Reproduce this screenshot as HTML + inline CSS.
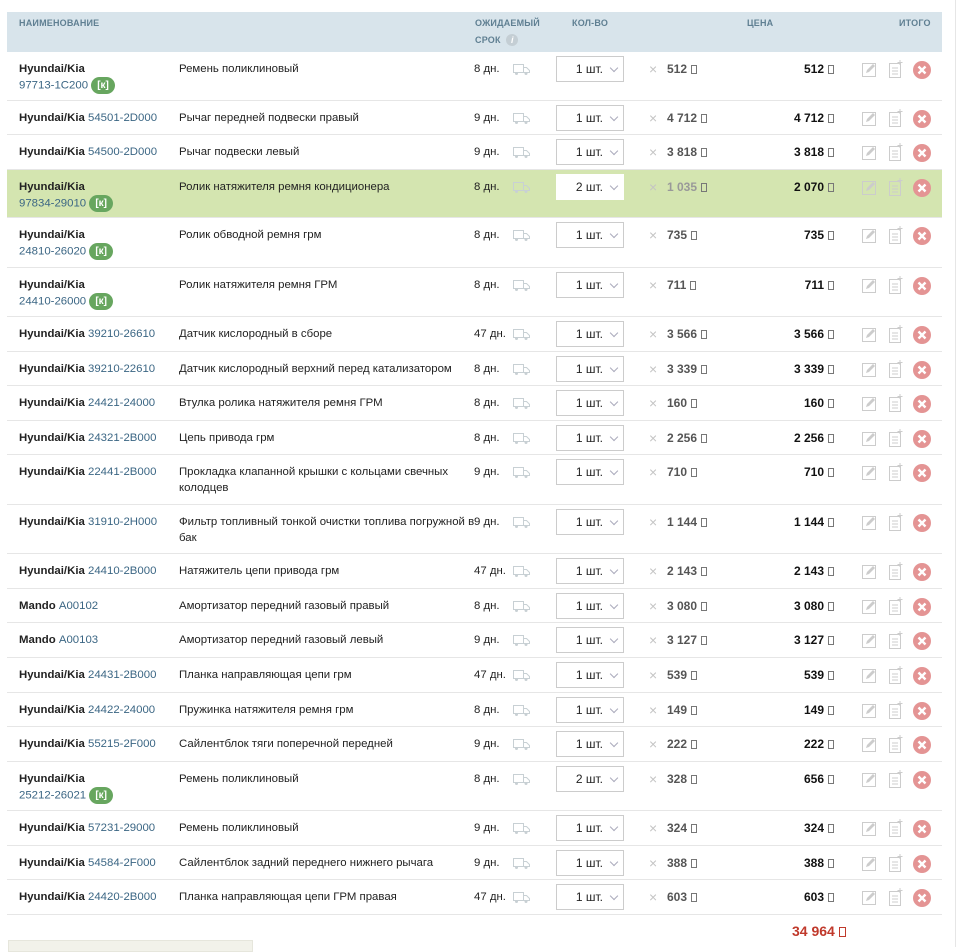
<!DOCTYPE html>
<html><head><meta charset="utf-8">
<style>
*{margin:0;padding:0;box-sizing:border-box}
body{width:960px;height:947px;background:#fff;font-family:"Liberation Sans",Arial,sans-serif;font-size:11.4px;line-height:14px;color:#222;position:relative;overflow:hidden}
.vl{position:absolute;left:955px;top:0;width:1px;height:947px;background:#e6e6e6}
.hd{position:absolute;left:7px;top:12px;width:935px;height:40px;background:#d8e4eb;color:#5f7f92;font-size:9px;font-weight:bold;letter-spacing:.2px}
.hd span{position:absolute}
.r{position:absolute;left:7px;width:935px;border-bottom:1px solid #e6e6e6}
.r.g{background:#d4e5b0}
.r>*{position:absolute}
.b{left:12px;top:10px;font-weight:bold}
.code{color:#3b6684;font-weight:normal}
.b2{left:12px;top:25px;color:#3b6684}
.k{display:inline-block;background:#67a65f;color:#fff;font-weight:bold;font-size:10px;border-radius:9px;width:24px;height:17px;line-height:17px;text-align:center;vertical-align:middle;margin-left:3px}
.d{left:172px;top:9px;width:300px;line-height:16px}
.t{left:467px;top:10px}
.tk{left:506px;top:10px}
.q{left:549px;top:4px;width:68px;height:26px;border:1px solid #ccc;background:#fff;text-align:right;padding-right:20px;line-height:24px;font-size:12px}
.q i{position:absolute;right:6px;top:8px;width:6px;height:6px;border-right:1px solid #aab;border-bottom:1px solid #aab;transform:rotate(45deg)}
.x{left:642px;top:10px;color:#c4c4c4;font-size:14px;line-height:14px}
.p{left:660px;top:10px;font-weight:bold;color:#555;font-size:12px}
.s{display:inline-block;width:6px;height:9px;border:1px solid #777;margin-left:4px;vertical-align:-1px}
.tt{left:700px;top:10px;width:127px;text-align:right;font-weight:bold;color:#111;font-size:12px}
.ic{left:855px;top:8px}
</style></head><body>
<div class="vl"></div>
<div class="hd">
<span style="left:12px;top:4px">НАИМЕНОВАНИЕ</span>
<span style="left:468px;top:4px">ОЖИДАЕМЫЙ</span>
<span style="left:468px;top:21px">СРОК <b style="display:inline-block;width:12px;height:12px;border-radius:6px;background:#c4ced4;color:#fff;text-align:center;font-style:italic;line-height:12px;margin-left:3px">i</b></span>
<span style="left:565px;top:4px">КОЛ-ВО</span>
<span style="left:740px;top:4px">ЦЕНА</span>
<span style="left:892px;top:4px">ИТОГО</span>
</div>

<svg width="0" height="0" style="position:absolute">
<defs>
<g id="trk"><rect x="0.5" y="2.5" width="10" height="8" fill="none" stroke="#c8d0d4"/><path d="M10.5 5.5h3l3 3v2h-6z" fill="none" stroke="#c8d0d4"/><circle cx="3.5" cy="11.5" r="1.5" fill="#c8d0d4"/><circle cx="13" cy="11.5" r="1.5" fill="#c8d0d4"/></g>
<g id="ics"><rect x="0.5" y="3.5" width="13" height="13" fill="none" stroke="#ccc"/><path d="M4 13l1-3 6-6 2 2-6 6z" fill="#ccc"/>
<rect x="27.5" y="3.5" width="11" height="14" fill="none" stroke="#ccc"/><path d="M30 8h6M30 11h6M30 14h6" stroke="#ccc"/><path d="M38 0v5M35.5 2.5h5" stroke="#ccc"/>
<circle cx="60" cy="10" r="9" fill="#e49494"/><path d="M56.5 6.5l7 7M63.5 6.5l-7 7" stroke="#fff" stroke-width="2.4"/></g>
</defs></svg>

<div class="r" style="top:52px;height:49px"><span class="b">Hyundai/Kia</span><span class="b2">97713-1C200<span class="k">[к]</span></span><span class="d">Ремень поликлиновый</span><span class="t">8 дн.</span><svg class="tk" width="18" height="14"><use href="#trk"/></svg><span class="q">1 шт.<i></i></span><span class="x">×</span><span class="p">512<i class="s"></i></span><span class="tt">512<i class="s"></i></span><svg class="ic" width="72" height="20"><use href="#ics"/></svg></div>
<div class="r" style="top:101px;height:34px"><span class="b">Hyundai/Kia <span class="code">54501-2D000</span></span><span class="d">Рычаг передней подвески правый</span><span class="t">9 дн.</span><svg class="tk" width="18" height="14"><use href="#trk"/></svg><span class="q">1 шт.<i></i></span><span class="x">×</span><span class="p">4 712<i class="s"></i></span><span class="tt">4 712<i class="s"></i></span><svg class="ic" width="72" height="20"><use href="#ics"/></svg></div>
<div class="r" style="top:135px;height:35px"><span class="b">Hyundai/Kia <span class="code">54500-2D000</span></span><span class="d">Рычаг подвески левый</span><span class="t">9 дн.</span><svg class="tk" width="18" height="14"><use href="#trk"/></svg><span class="q">1 шт.<i></i></span><span class="x">×</span><span class="p">3 818<i class="s"></i></span><span class="tt">3 818<i class="s"></i></span><svg class="ic" width="72" height="20"><use href="#ics"/></svg></div>
<div class="r g" style="top:170px;height:48px"><span class="b">Hyundai/Kia</span><span class="b2">97834-29010<span class="k">[к]</span></span><span class="d">Ролик натяжителя ремня кондиционера</span><span class="t">8 дн.</span><svg class="tk" width="18" height="14"><use href="#trk"/></svg><span class="q" style="border-color:#fff">2 шт.<i></i></span><span class="x">×</span><span class="p" style="color:#999">1 035<i class="s"></i></span><span class="tt">2 070<i class="s"></i></span><svg class="ic" width="72" height="20"><use href="#ics"/></svg></div>
<div class="r" style="top:218px;height:50px"><span class="b">Hyundai/Kia</span><span class="b2">24810-26020<span class="k">[к]</span></span><span class="d">Ролик обводной ремня грм</span><span class="t">8 дн.</span><svg class="tk" width="18" height="14"><use href="#trk"/></svg><span class="q">1 шт.<i></i></span><span class="x">×</span><span class="p">735<i class="s"></i></span><span class="tt">735<i class="s"></i></span><svg class="ic" width="72" height="20"><use href="#ics"/></svg></div>
<div class="r" style="top:268px;height:49px"><span class="b">Hyundai/Kia</span><span class="b2">24410-26000<span class="k">[к]</span></span><span class="d">Ролик натяжителя ремня ГРМ</span><span class="t">8 дн.</span><svg class="tk" width="18" height="14"><use href="#trk"/></svg><span class="q">1 шт.<i></i></span><span class="x">×</span><span class="p">711<i class="s"></i></span><span class="tt">711<i class="s"></i></span><svg class="ic" width="72" height="20"><use href="#ics"/></svg></div>
<div class="r" style="top:317px;height:35px"><span class="b">Hyundai/Kia <span class="code">39210-26610</span></span><span class="d">Датчик кислородный в сборе</span><span class="t">47 дн.</span><svg class="tk" width="18" height="14"><use href="#trk"/></svg><span class="q">1 шт.<i></i></span><span class="x">×</span><span class="p">3 566<i class="s"></i></span><span class="tt">3 566<i class="s"></i></span><svg class="ic" width="72" height="20"><use href="#ics"/></svg></div>
<div class="r" style="top:352px;height:34px"><span class="b">Hyundai/Kia <span class="code">39210-22610</span></span><span class="d">Датчик кислородный верхний перед катализатором</span><span class="t">8 дн.</span><svg class="tk" width="18" height="14"><use href="#trk"/></svg><span class="q">1 шт.<i></i></span><span class="x">×</span><span class="p">3 339<i class="s"></i></span><span class="tt">3 339<i class="s"></i></span><svg class="ic" width="72" height="20"><use href="#ics"/></svg></div>
<div class="r" style="top:386px;height:35px"><span class="b">Hyundai/Kia <span class="code">24421-24000</span></span><span class="d">Втулка ролика натяжителя ремня ГРМ</span><span class="t">8 дн.</span><svg class="tk" width="18" height="14"><use href="#trk"/></svg><span class="q">1 шт.<i></i></span><span class="x">×</span><span class="p">160<i class="s"></i></span><span class="tt">160<i class="s"></i></span><svg class="ic" width="72" height="20"><use href="#ics"/></svg></div>
<div class="r" style="top:421px;height:34px"><span class="b">Hyundai/Kia <span class="code">24321-2B000</span></span><span class="d">Цепь привода грм</span><span class="t">8 дн.</span><svg class="tk" width="18" height="14"><use href="#trk"/></svg><span class="q">1 шт.<i></i></span><span class="x">×</span><span class="p">2 256<i class="s"></i></span><span class="tt">2 256<i class="s"></i></span><svg class="ic" width="72" height="20"><use href="#ics"/></svg></div>
<div class="r" style="top:455px;height:50px"><span class="b">Hyundai/Kia <span class="code">22441-2B000</span></span><span class="d">Прокладка клапанной крышки с кольцами свечных колодцев</span><span class="t">9 дн.</span><svg class="tk" width="18" height="14"><use href="#trk"/></svg><span class="q">1 шт.<i></i></span><span class="x">×</span><span class="p">710<i class="s"></i></span><span class="tt">710<i class="s"></i></span><svg class="ic" width="72" height="20"><use href="#ics"/></svg></div>
<div class="r" style="top:505px;height:49px"><span class="b">Hyundai/Kia <span class="code">31910-2H000</span></span><span class="d">Фильтр топливный тонкой очистки топлива погружной в бак</span><span class="t">9 дн.</span><svg class="tk" width="18" height="14"><use href="#trk"/></svg><span class="q">1 шт.<i></i></span><span class="x">×</span><span class="p">1 144<i class="s"></i></span><span class="tt">1 144<i class="s"></i></span><svg class="ic" width="72" height="20"><use href="#ics"/></svg></div>
<div class="r" style="top:554px;height:35px"><span class="b">Hyundai/Kia <span class="code">24410-2B000</span></span><span class="d">Натяжитель цепи привода грм</span><span class="t">47 дн.</span><svg class="tk" width="18" height="14"><use href="#trk"/></svg><span class="q">1 шт.<i></i></span><span class="x">×</span><span class="p">2 143<i class="s"></i></span><span class="tt">2 143<i class="s"></i></span><svg class="ic" width="72" height="20"><use href="#ics"/></svg></div>
<div class="r" style="top:589px;height:34px"><span class="b">Mando <span class="code">A00102</span></span><span class="d">Амортизатор передний газовый правый</span><span class="t">8 дн.</span><svg class="tk" width="18" height="14"><use href="#trk"/></svg><span class="q">1 шт.<i></i></span><span class="x">×</span><span class="p">3 080<i class="s"></i></span><span class="tt">3 080<i class="s"></i></span><svg class="ic" width="72" height="20"><use href="#ics"/></svg></div>
<div class="r" style="top:623px;height:35px"><span class="b">Mando <span class="code">A00103</span></span><span class="d">Амортизатор передний газовый левый</span><span class="t">9 дн.</span><svg class="tk" width="18" height="14"><use href="#trk"/></svg><span class="q">1 шт.<i></i></span><span class="x">×</span><span class="p">3 127<i class="s"></i></span><span class="tt">3 127<i class="s"></i></span><svg class="ic" width="72" height="20"><use href="#ics"/></svg></div>
<div class="r" style="top:658px;height:35px"><span class="b">Hyundai/Kia <span class="code">24431-2B000</span></span><span class="d">Планка направляющая цепи грм</span><span class="t">47 дн.</span><svg class="tk" width="18" height="14"><use href="#trk"/></svg><span class="q">1 шт.<i></i></span><span class="x">×</span><span class="p">539<i class="s"></i></span><span class="tt">539<i class="s"></i></span><svg class="ic" width="72" height="20"><use href="#ics"/></svg></div>
<div class="r" style="top:693px;height:34px"><span class="b">Hyundai/Kia <span class="code">24422-24000</span></span><span class="d">Пружинка натяжителя ремня грм</span><span class="t">8 дн.</span><svg class="tk" width="18" height="14"><use href="#trk"/></svg><span class="q">1 шт.<i></i></span><span class="x">×</span><span class="p">149<i class="s"></i></span><span class="tt">149<i class="s"></i></span><svg class="ic" width="72" height="20"><use href="#ics"/></svg></div>
<div class="r" style="top:727px;height:35px"><span class="b">Hyundai/Kia <span class="code">55215-2F000</span></span><span class="d">Сайлентблок тяги поперечной передней</span><span class="t">9 дн.</span><svg class="tk" width="18" height="14"><use href="#trk"/></svg><span class="q">1 шт.<i></i></span><span class="x">×</span><span class="p">222<i class="s"></i></span><span class="tt">222<i class="s"></i></span><svg class="ic" width="72" height="20"><use href="#ics"/></svg></div>
<div class="r" style="top:762px;height:49px"><span class="b">Hyundai/Kia</span><span class="b2">25212-26021<span class="k">[к]</span></span><span class="d">Ремень поликлиновый</span><span class="t">8 дн.</span><svg class="tk" width="18" height="14"><use href="#trk"/></svg><span class="q">2 шт.<i></i></span><span class="x">×</span><span class="p">328<i class="s"></i></span><span class="tt">656<i class="s"></i></span><svg class="ic" width="72" height="20"><use href="#ics"/></svg></div>
<div class="r" style="top:811px;height:35px"><span class="b">Hyundai/Kia <span class="code">57231-29000</span></span><span class="d">Ремень поликлиновый</span><span class="t">9 дн.</span><svg class="tk" width="18" height="14"><use href="#trk"/></svg><span class="q">1 шт.<i></i></span><span class="x">×</span><span class="p">324<i class="s"></i></span><span class="tt">324<i class="s"></i></span><svg class="ic" width="72" height="20"><use href="#ics"/></svg></div>
<div class="r" style="top:846px;height:34px"><span class="b">Hyundai/Kia <span class="code">54584-2F000</span></span><span class="d">Сайлентблок задний переднего нижнего рычага</span><span class="t">9 дн.</span><svg class="tk" width="18" height="14"><use href="#trk"/></svg><span class="q">1 шт.<i></i></span><span class="x">×</span><span class="p">388<i class="s"></i></span><span class="tt">388<i class="s"></i></span><svg class="ic" width="72" height="20"><use href="#ics"/></svg></div>
<div class="r" style="top:880px;height:35px"><span class="b">Hyundai/Kia <span class="code">24420-2B000</span></span><span class="d">Планка направляющая цепи ГРМ правая</span><span class="t">47 дн.</span><svg class="tk" width="18" height="14"><use href="#trk"/></svg><span class="q">1 шт.<i></i></span><span class="x">×</span><span class="p">603<i class="s"></i></span><span class="tt">603<i class="s"></i></span><svg class="ic" width="72" height="20"><use href="#ics"/></svg></div>

<div style="position:absolute;left:792px;top:924px;color:#c0392b;font-weight:bold;font-size:14px">34 964<i class="s" style="border-color:#c0392b;height:10px;width:7px"></i></div>
<div style="position:absolute;left:8px;top:940px;width:245px;height:12px;background:#f2f2ea;border:1px solid #e6e6dc"></div>
</body></html>
